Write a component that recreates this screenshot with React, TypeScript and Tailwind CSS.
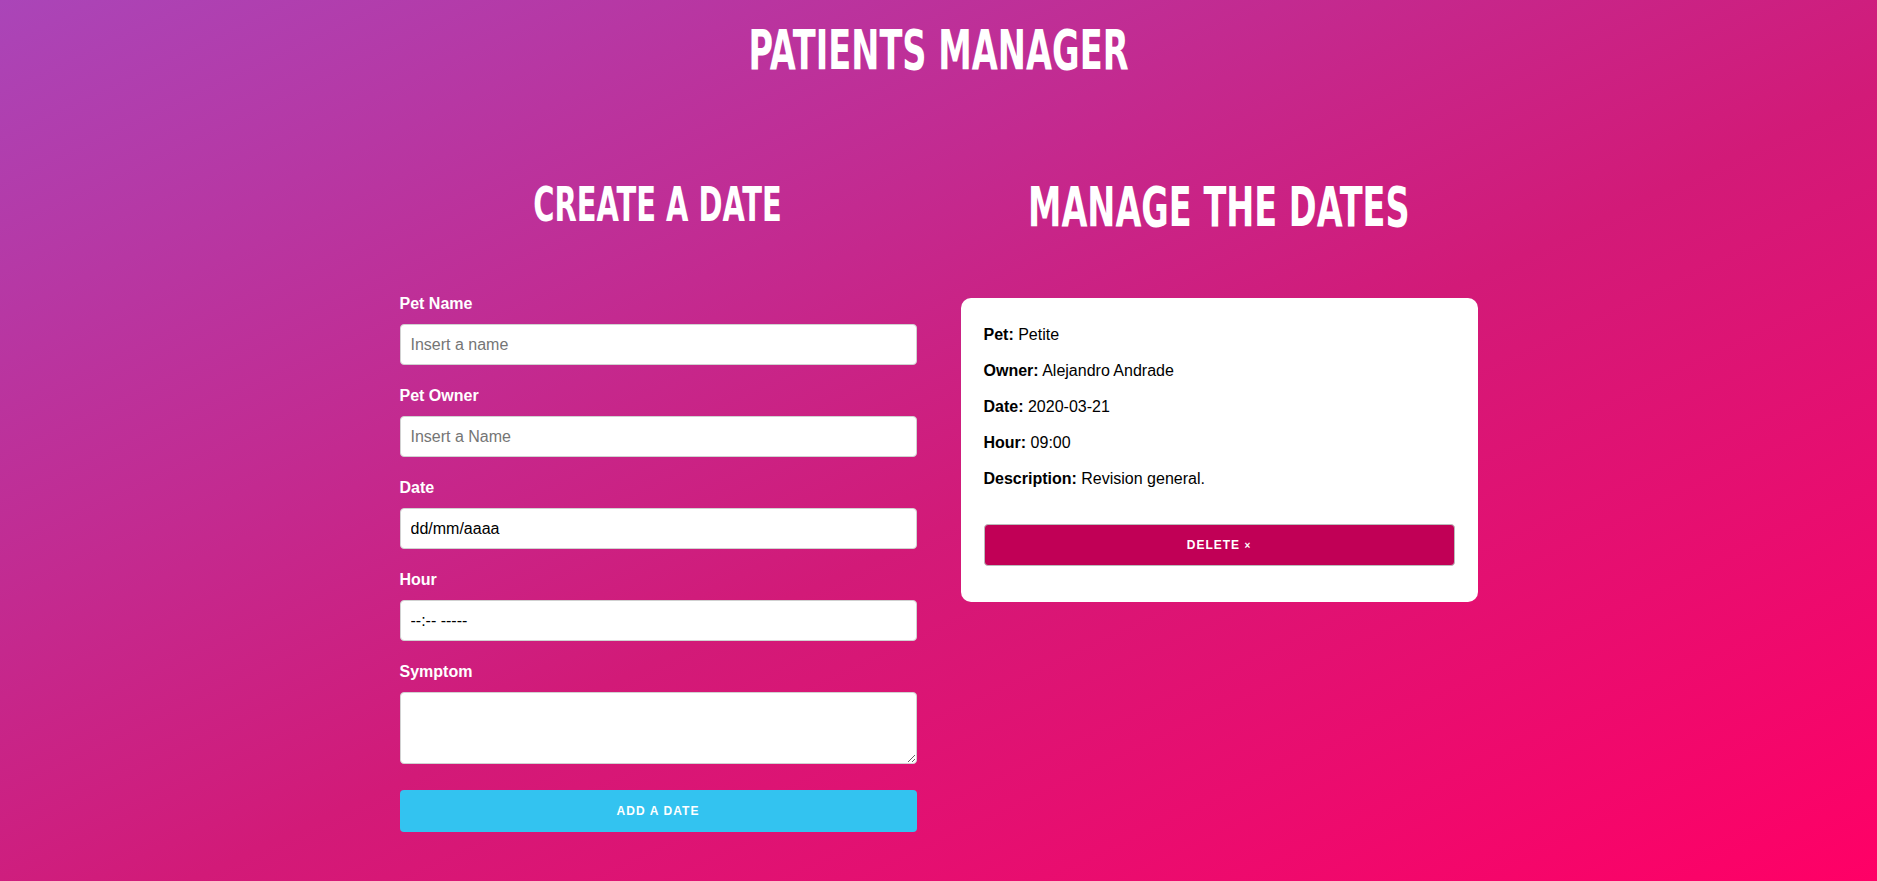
const heading = "font-['Liberation_Sans_Narrow','DejaVu_Sans_Condensed',sans-serif] font-bold uppercase text-white leading-none whitespace-nowrap"

function Field({ label, placeholder, value }: { label: string; placeholder?: string; value?: string }) {
  return (
    <>
      <label className="block text-[16px] font-bold leading-[20px] text-white">{label}</label>
      <input
        type="text"
        placeholder={placeholder}
        defaultValue={value}
        className="mt-[10px] mb-[21px] block h-[41px] w-full rounded-[4px] border border-[#d1d1d1] bg-white px-[10px] text-[16px] text-black placeholder:text-[#757575] outline-none"
      />
    </>
  )
}

function Row({ k, v }: { k: string; v: string }) {
  return (
    <p className="text-[16px] leading-[20px] text-black">
      <span className="font-bold">{k}:</span> {v}
    </p>
  )
}

export default function App() {
  return (
    <div className="min-h-[881px] w-full bg-[linear-gradient(to_bottom_right,#aa45b8,#d21a78_55%,#ff0066)] font-['Liberation_Sans',Arial,sans-serif]">
      <h1 className={`${heading} flex h-[78px] justify-center pt-[23px] text-[55px]`}>
        <span className="block scale-x-[0.68]">Patients Manager</span>
      </h1>

      <div className="mx-auto flex w-[1078px] items-start gap-[44px]">
        <div className="w-[517px]">
          <h2 className={`${heading} mt-[102px] flex justify-center text-[48px]`}>
            <span className="block scale-x-[0.67]">Create a date</span>
          </h2>
          <form className="mt-[66px]">
            <Field label="Pet Name" placeholder="Insert a name" />
            <Field label="Pet Owner" placeholder="Insert a Name" />
            <Field label="Date" value="dd/mm/aaaa" />
            <Field label="Hour" value="--:-- -----" />
            <label className="block text-[16px] font-bold leading-[20px] text-white">Symptom</label>
            <textarea className="mt-[10px] block h-[72px] w-full rounded-[4px] border border-[#d1d1d1] bg-white px-[10px] py-[6px] text-[16px] outline-none" />
            <button
              type="button"
              className="mt-[26px] block h-[42px] w-full rounded-[4px] bg-[#33c3f0] text-[12px] font-bold uppercase tracking-[1.1px] text-white"
            >
              Add a date
            </button>
          </form>
        </div>

        <div className="w-[517px]">
          <h2 className={`${heading} mt-[101px] flex justify-center text-[56px]`}>
            <span className="block scale-x-[0.665]">Manage the dates</span>
          </h2>
          <div className="mt-[63px] rounded-[10px] bg-white px-[23px] pt-[27px] pb-[36px]">
            <div className="flex flex-col gap-[16px]">
              <Row k="Pet" v="Petite" />
              <Row k="Owner" v="Alejandro Andrade" />
              <Row k="Date" v="2020-03-21" />
              <Row k="Hour" v="09:00" />
              <Row k="Description" v="Revision general." />
            </div>
            <button
              type="button"
              className="mt-[35px] block h-[42px] w-full rounded-[4px] border border-[#bbbbbb] bg-[#c10056] text-[12px] font-bold uppercase tracking-[1px] text-white"
            >
              Delete <span className="text-[10px]">×</span>
            </button>
          </div>
        </div>
      </div>
    </div>
  )
}
